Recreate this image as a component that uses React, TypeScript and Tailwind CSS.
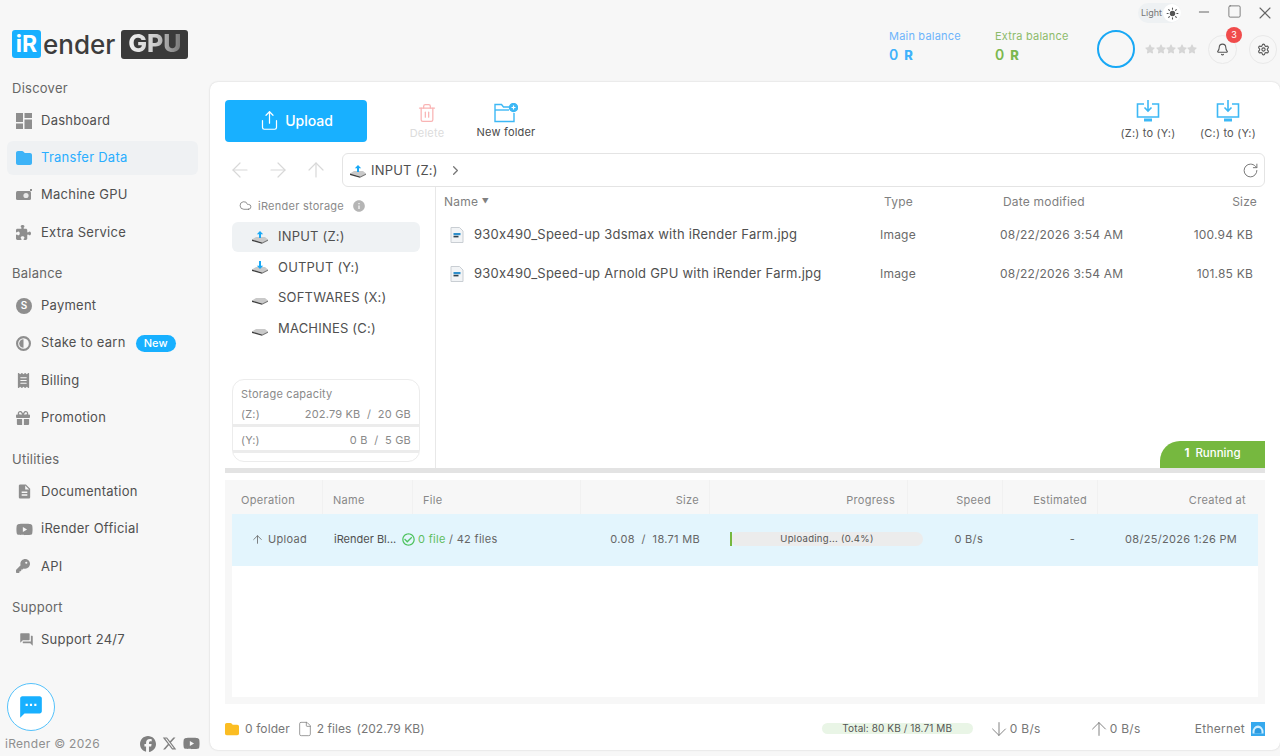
import type { ReactNode } from 'react';
import { ArrowDown, ArrowLeft, ArrowRight, ArrowUp, Bell, ChevronRight, Cloud, File as FileIcon, Minus, RotateCw, Settings, Share, Square, Sun, Trash2, X } from 'lucide-react';
import { FaFacebook, FaFolder, FaGift, FaKey, FaPuzzlePiece, FaReceipt, FaStar, FaXTwitter, FaYoutube } from 'react-icons/fa6';
import { MdCheckCircleOutline, MdDescription, MdForum, MdInfo, MdSms } from 'react-icons/md';

// ===== small drawn icons =====
function DashIcon() {
	return (
		<svg width="16" height="16" viewBox="0 0 16 16" fill="#8e8e8e">
			<rect x="0" y="0" width="7" height="9" />
			<rect x="8.5" y="0" width="7.5" height="5" />
			<rect x="8.5" y="6.5" width="7.5" height="9.5" />
			<rect x="0" y="10.5" width="7" height="5.5" />
		</svg>
	);
}

function GpuIcon() {
	return (
		<svg width="16" height="12" viewBox="0 0 16 12" fill="#8e8e8e">
			<rect x="0" y="2" width="15" height="9" rx="1.5" />
			<circle cx="10" cy="6.5" r="2.6" fill="#e8e8e8" />
			<rect x="14" y="0" width="2" height="2" />
		</svg>
	);
}

function PayIcon() {
	return (
		<span className="w-4 h-4 rounded-full bg-[#8e8e8e] text-white text-[10px] font-semibold flex items-center justify-center">S</span>
	);
}

function StakeIcon() {
	return (
		<svg width="15" height="15" viewBox="0 0 14 14">
			<circle cx="7" cy="7" r="6" fill="none" stroke="#8e8e8e" strokeWidth="2" />
			<path d="M7 3a4 4 0 0 0 0 8z" fill="#8e8e8e" />
		</svg>
	);
}

function DriveIcon(props: { arrow?: 'up' | 'down' }) {
	return (
		<svg width="18" height="14" viewBox="0 0 18 14">
			<path d="M1 9.5 5 7h9l3 2.5-6 3z" fill="#c9c9c9" />
			<path d="M1 9.5 11 12.5v1.2L1 11z" fill="#3f3f3f" />
			<path d="M11 12.5l6-3v1.2l-6 3z" fill="#777" />
			{props.arrow === 'up' && <path d="M9 1 5.8 4.2H8V8h2V4.2h2.2z" fill="#18a8f5" />}
			{props.arrow === 'down' && <path d="M9 9 5.8 5.8H8V1h2v4.8h2.2z" fill="#18a8f5" />}
		</svg>
	);
}

function ImgFileIcon() {
	return (
		<svg width="14" height="16" viewBox="0 0 14 16">
			<path d="M1 .5h8.5L13 4v11.5H1z" fill="#f2f4f6" stroke="#c9ced3" />
			<rect x="3.5" y="6" width="7" height="2.2" fill="#2f8fcb" />
			<rect x="3.5" y="8.8" width="5" height="1.6" fill="#30414d" />
		</svg>
	);
}

function NewFolderIcon() {
	return (
		<svg width="24" height="20" viewBox="0 0 24 20" fill="none" stroke="#3db8f5" strokeWidth="1.4">
			<path d="M15 4H9.5L7.5 1.5H1v17h19V10" />
			<path d="M1 7h14" />
			<circle cx="19.5" cy="4.5" r="4" fill="#3db8f5" />
			<path d="M19.5 2.5v4M17.5 4.5h4" stroke="#fff" strokeWidth="1.2" />
		</svg>
	);
}

function TransferIcon() {
	return (
		<svg width="24" height="23" viewBox="0 0 24 23" fill="none" stroke="#3db8f5" strokeWidth="1.6">
			<path d="M8 4H1.5v13h21V4H16" />
			<path d="M12 0v11M8.5 7.5 12 11l3.5-3.5" />
			<path d="M8 20h8" strokeWidth="3" />
		</svg>
	);
}

function EthernetIcon() {
	return (
		<svg width="14" height="14" viewBox="0 0 14 14">
			<rect width="14" height="14" fill="#35a9ee" />
			<path d="M1.5 10a5.5 6.5 0 0 1 11 0v1.5h-11z" fill="#cfeeff" />
			<path d="M3.5 10a3.5 4 0 0 1 7 0v1.5h-7z" fill="#2c9be0" />
		</svg>
	);
}

function Coin() {
	return <span className="text-[13px] font-extrabold ml-[6px]">R</span>;
}

// ===== Sidebar =====
function NavItem(props: { icon: ReactNode; label: string; active?: boolean; badge?: string }) {
	return (
		<div className={`h-[34px] my-[1.65px] ml-[7px] w-[191px] rounded-md flex items-center ${props.active ? 'bg-[#eff1f3] text-[#2aaeff]' : 'text-[#505050]'}`}>
			<span className="w-[34px] pl-[9px] flex items-center">{props.icon}</span>
			<span className="text-[13px] tracking-[0.25px]">{props.label}</span>
			{props.badge && <span className="ml-[10px] w-[40px] h-[17px] rounded-full bg-[#18b0ff] text-white text-[11px] font-medium flex items-center justify-center">{props.badge}</span>}
		</div>
	);
}

function NavTitle(props: { label: string; mt: string }) {
	return <div className={`pl-3 text-[13px] leading-[16px] tracking-[0.25px] text-[#666] mb-[6px] ${props.mt}`}>{props.label}</div>;
}

function Sidebar() {
	const gray = 'text-[#8e8e8e]';
	return (
		<aside className="w-[209px] h-full flex flex-col pt-[30px]">
			<div className="pl-3 flex items-center h-[28px]">
				<span className="w-[29px] h-[28px] rounded-[3px] bg-[#18b0ff] text-white text-[23px] font-bold flex items-center justify-center">iR</span>
				<span className="ml-[2px] text-[26px] font-medium text-[#3d3d3d]">ender</span>
				<span className="ml-[6px] w-[67px] h-[29px] rounded-[3px] bg-[#3a3a3a] flex items-center justify-center">
					<span className="text-[25px] font-extrabold bg-gradient-to-r from-[#f2f2f2] via-[#cfcfcf] to-[#777] bg-clip-text text-transparent">GPU</span>
				</span>
			</div>
			<NavTitle label="Discover" mt="mt-[22px]" />
			<NavItem icon={<DashIcon />} label="Dashboard" />
			<NavItem active icon={<FaFolder size={16} className="text-[#3db3f7]" />} label="Transfer Data" />
			<NavItem icon={<GpuIcon />} label="Machine GPU" />
			<NavItem icon={<FaPuzzlePiece size={15} className={gray} />} label="Extra Service" />
			<NavTitle label="Balance" mt="mt-[14px]" />
			<NavItem icon={<PayIcon />} label="Payment" />
			<NavItem icon={<StakeIcon />} label="Stake to earn" badge="New" />
			<NavItem icon={<FaReceipt size={15} className={gray} />} label="Billing" />
			<NavItem icon={<FaGift size={14} className={gray} />} label="Promotion" />
			<NavTitle label="Utilities" mt="mt-[15px]" />
			<NavItem icon={<MdDescription size={17} className={gray} />} label="Documentation" />
			<NavItem icon={<FaYoutube size={17} className={gray} />} label="iRender Official" />
			<NavItem icon={<FaKey size={14} className={gray} />} label="API" />
			<NavTitle label="Support" mt="mt-[14px]" />
			<NavItem icon={<MdForum size={15} className={`${gray} ml-[3px]`} />} label="Support 24/7" />
			<div className="mt-auto ml-[7px] w-[48px] h-[48px] rounded-full bg-white border border-[#55c2fb] flex items-center justify-center">
				<MdSms size={26} className="text-[#18b0ff]" />
			</div>
			<div className="pl-[5px] pr-[9px] h-[25px] flex items-center justify-between">
				<span className="text-[12px] tracking-[0.3px] text-[#8f8f8f]">iRender © 2026</span>
				<span className="flex items-center gap-[6px] text-[#808080]">
					<FaFacebook size={16} />
					<FaXTwitter size={15} />
					<FaYoutube size={17} />
				</span>
			</div>
		</aside>
	);
}

// ===== Header =====
function Header() {
	return (
		<header className="h-[82px] flex flex-col">
			<div className="h-[26px] pt-[3px] flex items-start justify-end pr-[6px]">
				<div className="w-[43px] h-[20px] rounded-full bg-[#eef1f3] flex items-center justify-between pl-[3px] mr-[15px]">
					<span className="text-[9px] text-[#777]">Light</span>
					<span className="w-[18px] h-[18px] rounded-full bg-white flex items-center justify-center"><Sun size={13} fill="#555" className="text-[#555]" /></span>
				</div>
				<Minus size={16} strokeWidth={1.5} className="text-[#666] mt-[1px] mr-[15px]" />
				<Square size={15} strokeWidth={1.3} className="text-[#666] mt-[1px] mr-[13px]" />
				<X size={20} strokeWidth={1.3} className="text-[#666] -mr-[1px]" />
			</div>
			<div className="flex items-start justify-end pr-[3px] mt-[2px]">
				<div className="w-[106px] mt-[1px]">
					<div className="text-[11px] tracking-[0.2px] leading-[15px] text-[#6db4fb]">Main balance</div>
					<div className="text-[14px] font-semibold leading-[20px] mt-[1px] text-[#3fb2fb]">0<Coin /></div>
				</div>
				<div className="w-[102px] mt-[1px]">
					<div className="text-[11px] tracking-[0.2px] leading-[15px] text-[#8dbb6b]">Extra balance</div>
					<div className="text-[14px] font-semibold leading-[20px] mt-[1px] text-[#7cb84e]">0<Coin /></div>
				</div>
				<div className="mt-[2px] w-[38px] h-[38px] rounded-full border-2 border-[#18a8f5]" />
				<div className="mt-[16px] ml-[10px] flex gap-[0.5px] text-[#d6d6d6]">
					<FaStar size={10} /><FaStar size={10} /><FaStar size={10} /><FaStar size={10} /><FaStar size={10} />
				</div>
				<div className="relative mt-[7px] ml-[11px] w-[29px] h-[29px] rounded-full border border-[#e9e9e9] flex items-center justify-center">
					<Bell size={13} className="text-[#555]" />
					<span className="absolute -top-[9px] left-[17px] w-[16px] h-[16px] rounded-full bg-[#f04b4b] text-white text-[9px] flex items-center justify-center">3</span>
				</div>
				<div className="mt-[7px] ml-[12px] w-[28px] h-[29px] rounded-full border border-[#e9e9e9] flex items-center justify-center">
					<Settings size={13} className="text-[#555]" />
				</div>
			</div>
		</header>
	);
}

// ===== Toolbar =====
function Toolbar() {
	return (
		<div className="h-[60px] flex items-start pt-[18px]">
			<button className="w-[142px] h-[42px] pb-[2px] rounded-[4px] bg-[#18b0ff] text-white text-[14px] font-medium flex items-center justify-center gap-[5px]">
				<Share size={21} strokeWidth={1.4} />
				Upload
			</button>
			<div className="ml-[21px] w-[78px] pt-[3px] flex flex-col items-center text-[#dcdcdc]">
				<Trash2 size={20} strokeWidth={1.5} className="text-[#f9b4b4]" />
				<span className="text-[11px] tracking-[0.2px] mt-[2px]">Delete</span>
			</div>
			<div className="ml-[1px] w-[78px] pt-[3px] flex flex-col items-center text-[#4a4a4a]">
				<NewFolderIcon />
				<span className="text-[11px] tracking-[0.2px] mt-[1px]">New folder</span>
			</div>
			<div className="ml-auto w-[86px] flex flex-col items-center text-[#555]">
				<TransferIcon />
				<span className="text-[11px] tracking-[0.2px] mt-[2px]">(Z:) to (Y:)</span>
			</div>
			<div className="w-[74px] flex flex-col items-center text-[#555]">
				<TransferIcon />
				<span className="text-[11px] tracking-[0.2px] mt-[2px]">(C:) to (Y:)</span>
			</div>
		</div>
	);
}

function AddressBar() {
	return (
		<div className="flex items-center mt-[11px] h-[34px] text-[#d8d8d8]">
			<ArrowLeft size={24} strokeWidth={1.2} className="ml-[3px]" />
			<ArrowRight size={24} strokeWidth={1.2} className="ml-[14px]" />
			<ArrowUp size={24} strokeWidth={1.2} className="ml-[14px]" />
			<div className="ml-[14px] flex-1 h-[34px] pt-[1px] rounded-md border border-[#e4e4e4] flex items-center pl-[6px] pr-[5px] text-[#505050]">
				<DriveIcon arrow="up" />
				<span className="ml-[4px] text-[13px] tracking-[0.2px]">INPUT (Z:)</span>
				<ChevronRight size={15} className="ml-[10px] text-[#777]" />
				<RotateCw size={17} strokeWidth={1.4} className="ml-auto text-[#777]" />
			</div>
		</div>
	);
}

// ===== Panels =====
function DriveRow(props: { label: string; arrow?: 'up' | 'down'; active?: boolean }) {
	return (
		<div className={`h-[30.6px] rounded-md flex items-center pl-[19px] ${props.active ? 'bg-[#eff2f4]' : ''}`}>
			<DriveIcon arrow={props.arrow} />
			<span className="ml-[9px] text-[13px] tracking-[0.2px] text-[#505050]">{props.label}</span>
		</div>
	);
}

function Tree() {
	return (
		<div className="w-[211px] flex flex-col pl-[7px] pr-[15px] pb-[6px] border-r border-[#e8e8e8]">
			<div className="h-[34.5px] pt-[3px] flex items-center pl-[7px] text-[11px] tracking-[0.25px] text-[#8a8a8a]">
				<Cloud size={13} strokeWidth={1.5} className="text-[#777]" />
				<span className="ml-[6px]">iRender storage</span>
				<MdInfo size={14} className="ml-[8px] text-[#b5b5b5]" />
			</div>
			<DriveRow active label="INPUT (Z:)" arrow="up" />
			<DriveRow label="OUTPUT (Y:)" arrow="down" />
			<DriveRow label="SOFTWARES (X:)" />
			<DriveRow label="MACHINES (C:)" />
			<div className="mt-auto h-[83px] rounded-xl border border-[#ececec] text-[11px] tracking-[0.2px] text-[#8a8a8a] pt-[7px]">
				<div className="px-2 leading-[15px]">Storage capacity</div>
				<div className="px-2 mt-[5px] leading-[15px] flex justify-between"><span>(Z:)</span><span>202.79 KB&nbsp; / &nbsp;20 GB</span></div>
				<div className="h-[3px] mt-[2px] bg-[#ececec]" />
				<div className="px-2 mt-[6px] leading-[15px] flex justify-between"><span>(Y:)</span><span>0 B&nbsp; / &nbsp;5 GB</span></div>
				<div className="h-[3px] mt-[2px] bg-[#ececec]" />
			</div>
		</div>
	);
}

const files = [
	{ name: '930x490_Speed-up 3dsmax with iRender Farm.jpg', date: '08/22/2026 3:54 AM', size: '100.94 KB' },
	{ name: '930x490_Speed-up Arnold GPU with iRender Farm.jpg', date: '08/22/2026 3:54 AM', size: '101.85 KB' },
];

function FileList() {
	return (
		<div className="relative flex-1">
			<div className="h-[28px] pt-[2px] flex items-center text-[12px] tracking-[0.2px] text-[#808080] pl-[8px] pr-[8px]">
				<span className="w-[440px]">Name <span className="text-[7px] align-[2px]">▼</span></span>
				<span className="w-[119px]">Type</span>
				<span>Date modified</span>
				<span className="ml-auto">Size</span>
			</div>
			{files.map((f) => (
				<div key={f.name} className="h-[39px] flex items-center pl-[14px] pr-[12px] text-[#6a6a6a] text-[12px] tracking-[0.2px]">
					<ImgFileIcon />
					<span className="ml-[10px] w-[406px] text-[13px] tracking-[0.24px] text-[#505050]">{f.name}</span>
					<span className="w-[120px]">Image</span>
					<span>{f.date}</span>
					<span className="ml-auto">{f.size}</span>
				</div>
			))}
			{/* tab that sits on the divider */}
			<div className="absolute right-0 bottom-0 w-[105px] h-[27px] pb-[2px] rounded-tl-[20px] bg-[#76b83f] text-white text-[11.5px] font-medium flex items-center justify-center gap-[6px]">
				<span className="font-bold">1</span>Running
			</div>
		</div>
	);
}

const colsHead = 'grid grid-cols-[91px_90px_168px_129px_198px_95px_95px_160px]';

function Transfers() {
	const th = 'h-[34px] pt-[6px] flex items-center text-[11px] tracking-[0.3px] text-[#888] border-r border-[#f1f1f1]';
	return (
		<div className="mt-[7px] h-[224px] bg-[#f7f7f7] px-[7px] pb-[7px] flex flex-col">
			<div className={colsHead}>
				<div className={`${th} pl-[9px]`}>Operation</div>
				<div className={`${th} pl-[10px]`}>Name</div>
				<div className={`${th} pl-[10px]`}>File</div>
				<div className={`${th} justify-end pr-[10px]`}>Size</div>
				<div className={`${th} justify-end pr-[12px]`}>Progress</div>
				<div className={`${th} justify-end pr-[11px]`}>Speed</div>
				<div className={`${th} justify-end pr-[10px]`}>Estimated</div>
				<div className={`${th} justify-end pr-[12px] border-r-0`}>Created at</div>
			</div>
			<div className="h-[52px] pb-[2px] bg-[#e3f5fd] flex items-center text-[11px] tracking-[0.3px] text-[#666]">
				<span className="w-[102px] pl-[19px] flex items-center gap-[4px]"><ArrowUp size={13} strokeWidth={1.5} />Upload</span>
				<span className="w-[67px] tracking-normal text-[#505050]">iRender Bl...</span>
				<MdCheckCircleOutline size={15} className="text-[#4fc35f]" />
				<span className="ml-[2px] w-[182px]"><span className="text-[#5fbd5f]">0 file</span>&nbsp;/&nbsp;42 files</span>
				<span className="w-[100px] text-right">0.08&nbsp; / &nbsp;18.71 MB</span>
				<span className="ml-[31px] w-[192px] h-[14px] rounded-full bg-[#ececec] relative flex items-center justify-center text-[9.5px] text-[#555]">
					<span className="absolute -left-[1px] h-full w-[2px] bg-[#76b83f]" />
					Uploading... (0.4%)
				</span>
				<span className="w-[60px] text-right">0 B/s</span>
				<span className="w-[92px] text-right">-</span>
				<span className="w-[162px] text-right">08/25/2026 1:26 PM</span>
			</div>
			<div className="flex-1 bg-white" />
		</div>
	);
}

function StatusBar() {
	return (
		<div className="flex-1 pt-[3px] flex items-center text-[12px] tracking-[0.3px] text-[#777]">
			<FaFolder size={14} className="text-[#fbbd23]" />
			<span className="ml-[6px] tracking-[0.1px]">0 folder</span>
			<FileIcon size={16} strokeWidth={1.1} className="ml-[7px]" />
			<span className="ml-[4px] tracking-[0.05px]">2 files</span>
			<span className="ml-[5px] tracking-[0.05px]">(202.79 KB)</span>
			<span className="ml-auto w-[151px] h-[11px] rounded-full bg-[#e9f5e6] text-[10px] tracking-[0.1px] text-[#555] flex items-center justify-center">Total: 80 KB / 18.71 MB</span>
			<ArrowDown size={22} strokeWidth={1} className="ml-[15px]" />
			<span>0 B/s</span>
			<ArrowUp size={22} strokeWidth={1} className="ml-[47px]" />
			<span>0 B/s</span>
			<span className="ml-[54px]">Ethernet</span>
			<span className="ml-[6px]"><EthernetIcon /></span>
		</div>
	);
}

export default function App() {
	return (
		<div className="w-[1280px] h-[756px] overflow-hidden bg-[#f7f7f7] flex font-[family-name:Inter,sans-serif]">
			<Sidebar />
			<main className="flex-1 flex flex-col">
				<Header />
				<section className="ml-[1px] h-[668px] rounded-lg bg-white shadow-[0_0_2px_rgba(0,0,0,0.18)] px-[15px] flex flex-col">
					<Toolbar />
					<AddressBar />
					<div className="h-[281px] flex">
						<Tree />
						<FileList />
					</div>
					<div className="h-[5px] bg-[#e3e3e3]" />
					<Transfers />
					<StatusBar />
				</section>
			</main>
		</div>
	);
}
